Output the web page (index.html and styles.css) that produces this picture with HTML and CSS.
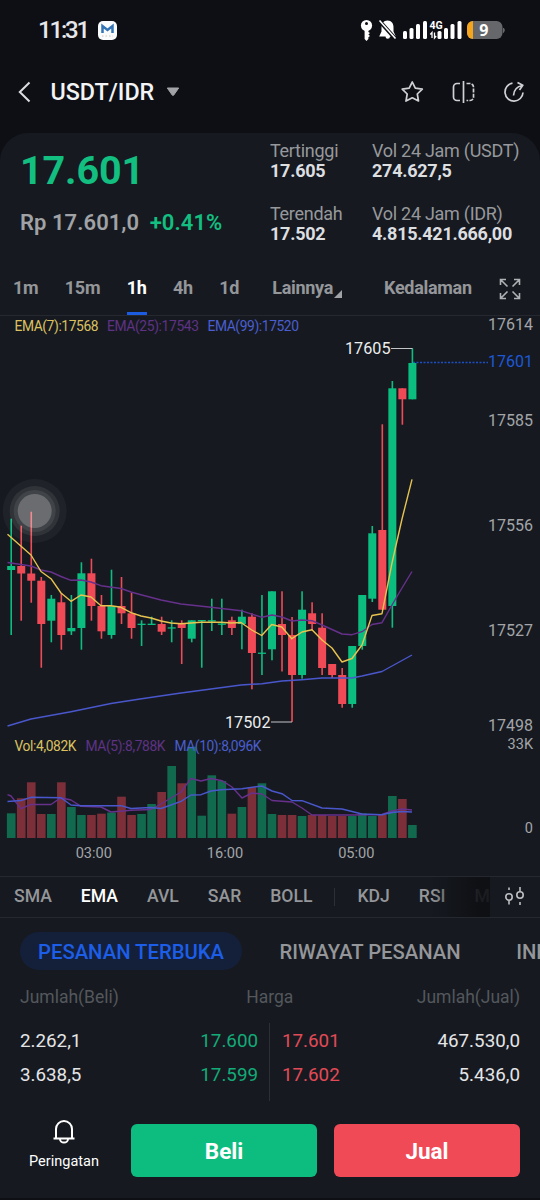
FILE: index.html
```html
<!DOCTYPE html>
<html lang="id">
  <head>
    <meta charset="UTF-8" />
    <meta name="viewport" content="width=device-width, initial-scale=1.0" />
    <title>USDT/IDR</title>
    <link rel="stylesheet" href="styles.css">
  </head>
  <body>
    <div class="status">
      <span class="time">11:31</span>
      <svg class="mail" width="19" height="19" viewBox="0 0 19 19">
        <rect width="19" height="19" rx="5" fill="#fafbfc" />
        <path d="M4.5 12V5L9.5 9L14.5 5V12" fill="none" stroke="#3474b4" stroke-width="2.5" />
        <path d="M4 15H15" stroke="#c9c4b8" stroke-width="1" stroke-dasharray="1.5 2" />
      </svg>
      <svg class="signals" width="146" height="24" viewBox="0 0 146 24">
        <circle cx="6.5" cy="7.5" r="5.6" fill="#fff" />
        <circle cx="6.5" cy="5.6" r="1.5" fill="#0e0f14" />
        <path d="M4.6 11H8.4V14L10 15L8.4 16.5L10 18L8.4 19.3V21L6.5 23L4.6 21Z" fill="#fff" />
        <path d="M27.5 2.5c-4 0-6 3-6 7v4l-2.3 5h16.6L33.5 13.5V9.5c0-4-2-7-6-7zM25.5 18.5h4.5a2.2 2.2 0 0 1-4.5 0z" fill="#fff" />
        <path d="M19.5 3L36 21.5" stroke="#0e0f14" stroke-width="4" />
        <path d="M19.5 2.5L35.5 20.5" stroke="#fff" stroke-width="1.6" />
        <g fill="#fff">
          <rect x="43" y="13" width="4" height="8" rx="1.5" />
          <rect x="49.5" y="10" width="4" height="11" rx="1.5" />
          <rect x="56" y="6" width="4" height="15" rx="1.5" />
          <rect x="63" y="3" width="4" height="18" rx="1.5" />
          <rect x="77.5" y="13" width="4" height="8" rx="1.5" />
          <rect x="84" y="10" width="4" height="11" rx="1.5" />
          <rect x="90.5" y="6" width="4" height="15" rx="1.5" />
          <rect x="97.5" y="3" width="4" height="18" rx="1.5" />
        </g>
        <path d="M72 20V14.5L70.3 16.5M74.5 14.5V20L76.2 18" stroke="#fff" stroke-width="1.3" fill="none" />
        <text class="net" x="69.5" y="11">4G</text>
        <clipPath id="cell"><rect x="107" y="3" width="35.5" height="18" rx="6" /></clipPath>
        <g clip-path="url(#cell)">
          <rect x="107" y="3" width="36" height="18" fill="#66676b" />
          <rect x="107" y="3" width="6" height="18" fill="#f5a51c" />
        </g>
        <path d="M143.5 10v4.5q1.8-2.2 0-4.5z" fill="#66676b" stroke="#66676b" />
        <text class="level" x="119.3" y="17.5">9</text>
      </svg>
    </div>

    <header class="header">
      <svg width="14" height="22" viewBox="0 0 14 22"><path d="M11.5 1.5L1.8 11L11.5 20.5" fill="none" stroke="#dcdde0" stroke-width="2" /></svg>
      <h1>USDT/IDR</h1>
      <svg class="caret" width="14" height="10" viewBox="0 0 14 10"><path d="M1.3 1H12.7L7.8 8Q7 9 6.2 8Z" fill="#a2a3a7" stroke="#a2a3a7" stroke-linejoin="round" /></svg>
      <svg class="tools" width="126" height="26" viewBox="0 0 126 26" fill="none" stroke="#d0d1d4" stroke-width="1.7" stroke-linejoin="round">
        <path d="M12.3 3L15.3 9.2L22.3 10.2L17.3 15L18.5 22L12.3 18.8L6 22L7.2 15L2.2 10.2L9.2 9.2Z" />
        <path d="M60 4.5H57a3.5 3.5 0 0 0-3.5 3.5v10a3.5 3.5 0 0 0 3.5 3.5h3M63.500 2V24" />
        <path d="M66.5 4.5H70a3.5 3.5 0 0 1 3.5 3.5v10a3.5 3.5 0 0 1-3.5 3.5h-3.5" stroke-dasharray="4 1.2" />
        <path d="M112.5 4.2A9 9 0 1 0 123 13.5M113.5 16.5Q114 8 122.5 6.5M117.5 3.5L122.8 6.3L119.5 11" />
      </svg>
    </header>

    <main class="panel">
      <section class="summary">
        <div class="last">
          <div class="price">17.601</div>
          <div class="fiat">Rp 17.601,0 <span class="up">+0.41%</span></div>
        </div>
        <dl class="range">
          <dt>Tertinggi</dt>
          <dd>17.605</dd>
          <dt>Terendah</dt>
          <dd>17.502</dd>
        </dl>
        <dl class="volume">
          <dt>Vol 24 Jam (USDT)</dt>
          <dd>274.627,5</dd>
          <dt>Vol 24 Jam (IDR)</dt>
          <dd>4.815.421.666,00</dd>
        </dl>
      </section>

      <nav class="frames">
        <span>1m</span>
        <span>15m</span>
        <span class="active">1h</span>
        <span>4h</span>
        <span>1d</span>
        <span class="more">Lainnya<i></i></span>
        <span class="depth">Kedalaman</span>
        <svg width="22" height="22" viewBox="0 0 22 22" fill="none" stroke="#b0b1b4" stroke-width="1.6">
          <path d="M1.5 7V1.5H7M1.5 1.5L8.5 8.5M15 1.5H20.5V7M20.5 1.5L13.5 8.5M1.5 15V20.5H7M1.5 20.5L8.5 13.5M15 20.5H20.5V15M20.5 20.5L13.5 13.5" />
        </svg>
      </nav>

      <svg class="chart" id="chart" width="540" height="560" viewBox="0 316 540 560">
        <g class="axis">
          <text x="533" y="330">17614</text>
          <text class="now" x="533" y="367">17601</text>
          <text x="533" y="426">17585</text>
          <text x="533" y="531">17556</text>
          <text x="533" y="636">17527</text>
          <text x="533" y="731">17498</text>
          <text class="small" x="533" y="748.5">33K</text>
          <text class="small" x="533" y="833">0</text>
        </g>
        <path d="M413 362.5H488" stroke="#1c4fc4" stroke-width="1.3" stroke-dasharray="2 1.5" />
        <g id="bars"></g>
        <g id="candles"></g>
        <g fill="none" stroke-width="1.4" stroke-linejoin="round">
          <polyline stroke="#4a57cc" points="7.5,726 31,719 71,711.7 111,703.5 140,699 181,693 241,685 262,683.7 282,681 302,679.7 322,678 352,678 362,676 382,671.5 412,655" />
          <polyline stroke="#67308c" points="7.5,562.5 21,564.5 31,566 41,570 51,572 61,576.5 71,580.3 81,580 91,582 101,585.7 121,588.5 131,592 140,594.5 161,600 181,604 211,607.3 241,610.7 262,617.3 272,615 282,617 292,621 302,620 312,620.7 322,625 342,634 352,634.7 362,631.7 372,624.5 382,622.7 392,605 402,588 412,571.5" />
          <polyline stroke="#e8c34f" points="7.5,534.3 31,555 41,571.5 51,578.7 61,593 71,601.3 81,595 91,597 101,605.7 111,605.7 121,607.3 131,612.7 141,616 151,618 161,621 171,623 181,623.7 201,622.3 221,622.3 231,623 241,622.5 251.7,630 261.7,635.5 271.7,624.5 281.8,627 291.8,638.7 302,632 312,629.7 322,640 332,648 342,662 352,658.5 362,645 372,615.5 382,613.7 392,563 402,519 412,479.3" />
          <polyline stroke="#67308c" points="7.5,794.7 11,796 21,808.7 31,804.5 51,804.5 61,797.7 71,800 81,806.3 101,807 111,812 131,810.3 151,809.5 161,804 171,798 181,792 191,778.5 201,781 211,778.5 222,780.7 232,787 242,798 252,793 262,794 272,800.5 292,802 302,808 312,815 352,815 382,814.5 392,811 402,809 412,810" />
          <polyline stroke="#4a57cc" points="7.5,801.5 21,800.5 31,797.3 61,797.7 71,805 81,805.7 121,805.7 131,808.5 151,807.5 161,808.5 171,805 181,801.3 191,795 201,794.7 211,791 221,789.7 242,788.7 262,786 272,791 282,793.7 292,800.5 302,800.7 322,808 342,809 362,814 382,814.7 392,812.5 402,811.5 412,812" />
        </g>
        <g class="marks">
          <path d="M391 348.5H412.5M271 722H292" stroke="#c3c4c7" stroke-width="1.2" />
          <text x="345" y="353.5">17605</text>
          <text x="225" y="727.5">17502</text>
        </g>
        <g class="legend">
          <text class="yellow" x="14.5" y="331" textLength="84">EMA(7):17568</text>
          <text class="purple" x="107" y="331" textLength="92">EMA(25):17543</text>
          <text class="blue" x="207.5" y="331" textLength="91.5">EMA(99):17520</text>
          <text class="yellow" x="14.5" y="751" textLength="62">Vol:4,082K</text>
          <text class="purple" x="85.5" y="751" textLength="80">MA(5):8,788K</text>
          <text class="blue" x="174.5" y="751" textLength="87">MA(10):8,096K</text>
        </g>
        <g class="hours">
          <text x="93.8" y="858">03:00</text>
          <text x="225" y="858">16:00</text>
          <text x="356.3" y="858">05:00</text>
        </g>
        <g fill="#fff">
          <circle cx="34.7" cy="511" r="32" fill-opacity="0.04" />
          <circle cx="34.7" cy="511" r="25" fill-opacity="0.08" />
          <circle cx="34.7" cy="511" r="21" fill-opacity="0.08" />
          <circle cx="34.7" cy="511" r="17" fill-opacity="0.22" />
        </g>
      </svg>

      <nav class="indicators">
        <div class="list">
          <span>SMA</span>
          <span class="active">EMA</span>
          <span>AVL</span>
          <span>SAR</span>
          <span>BOLL</span>
          <i></i>
          <span>KDJ</span>
          <span>RSI</span>
          <span class="cut">M</span>
        </div>
        <svg width="22" height="20" viewBox="0 0 22 20" fill="none" stroke="#bdbec1" stroke-width="1.6">
          <circle cx="5" cy="11" r="3.2" /><circle cx="16" cy="9" r="3.2" />
          <path d="M5 1.5V4M5 14.5V18.5M16 1V5.5M16 16V19" />
        </svg>
      </nav>

      <nav class="orders">
        <span class="active">PESANAN TERBUKA</span>
        <span class="history">RIWAYAT PESANAN</span>
        <span class="info">INFO</span>
      </nav>

      <section class="book">
        <div class="row head"><span>Jumlah(Beli)</span><span class="harga">Harga</span><span>Jumlah(Jual)</span></div>
        <div class="levels">
          <div class="side buy">
            <div class="row"><span>2.262,1</span><b>17.600</b></div>
            <div class="row"><span>3.638,5</span><b>17.599</b></div>
          </div>
          <div class="side sell">
            <div class="row"><b>17.601</b><span>467.530,0</span></div>
            <div class="row"><b>17.602</b><span>5.436,0</span></div>
          </div>
        </div>
      </section>

      <footer class="actions">
        <div class="alert">
          <svg width="24" height="26" viewBox="0 0 24 26" fill="none" stroke="#fff" stroke-width="2">
            <path d="M1.5 19.5H22.5M4 19.5V10a8 8 0 0 1 16 0V19.5M8 20a4 3.6 0 0 0 8 0" />
          </svg>
          <span>Peringatan</span>
        </div>
        <button class="beli">Beli</button>
        <button class="jual">Jual</button>
      </footer>
    </main>
    <script src="chart.js"></script>
  </body>
</html>
```
FILE: styles.css
```css
* {
  box-sizing: border-box;
}
body {
  margin: 0;
  width: 540px;
  height: 1200px;
  overflow: hidden;
  background: #0e0f14;
  color: #e4e5e7;
  font-family: Roboto, "Liberation Sans", sans-serif;
}
svg {
  display: block;
  flex: none;
}
dl, dd, h1 {
  margin: 0;
}

.status {
  display: flex;
  align-items: center;
  height: 60px;
  padding: 0 34px 0 38px;
}
.time {
  width: 60px;
  font-size: 24px;
  letter-spacing: -2.2px;
  color: #e6e7ea;
  font-weight: 500;
}
.signals {
  margin-left: auto;
}
.net {
  font: 700 10.5px Roboto, sans-serif;
  fill: #fff;
}
.level {
  font: 700 16px "Open Sans", sans-serif;
  fill: #fff;
}

.header {
  display: flex;
  align-items: center;
  height: 73px;
  padding: 0 14px 10px 18px;
}
.header h1 {
  margin-left: 18.5px;
  padding-top: 1px;
  font-size: 23.3px;
  font-weight: 500;
  color: #f2f3f5;
}
.caret {
  margin-left: 11.5px;
}
.tools {
  margin-left: auto;
}

.panel {
  height: 1065px;
  background: #161a20;
  border-radius: 28px 28px 0 0;
}

.summary {
  display: flex;
  height: 126px;
  padding: 7px 0 0 20px;
}
.last {
  width: 250px;
}
.price {
  height: 62px;
  padding-top: 8px;
  font-size: 39.5px;
  line-height: 46px;
  letter-spacing: -0.1px;
  font-weight: 700;
  color: #12be80;
}
.fiat {
  padding-top: 8px;
  font-size: 22px;
  line-height: 26px;
  font-weight: 600;
  letter-spacing: 0.05px;
  color: #a0a2a6;
  white-space: nowrap;
}
.up {
  margin-left: 5px;
  color: #12be80;
}
.range {
  width: 102px;
}
.summary dt {
  font-size: 18px;
  line-height: 21px;
  letter-spacing: -0.28px;
  color: #96989c;
  white-space: nowrap;
}
.summary dd {
  height: 42px;
  font-size: 18px;
  line-height: 19px;
  letter-spacing: -0.25px;
  font-weight: 700;
  color: #dddee0;
}

.frames {
  display: flex;
  align-items: center;
  height: 57px;
  padding: 0 19.5px 0 13px;
  border-bottom: 1px solid #25292f;
  font-size: 18px;
  letter-spacing: -0.3px;
  font-weight: 700;
  color: #94969a;
}
.frames span {
  line-height: 57px;
  height: 56px;
  margin-right: 26.5px;
}
.frames svg {
  margin-top: 3px;
}
.frames .active {
  color: #fff;
  border-bottom: 3px solid #1b5ce0;
}
.frames .more {
  position: relative;
  margin: 0 51px 0 6.5px;
}
.more i {
  position: absolute;
  right: -9px;
  bottom: 17px;
  border-bottom: 8px solid #a0a2a6;
  border-left: 8px solid transparent;
}
.frames .depth {
  margin-right: auto;
}

.legend text {
  font-size: 13.8px;
}
.yellow {
  fill: #dcc161;
}
.purple {
  fill: #5f3286;
}
.blue {
  fill: #4a5ed0;
}
.axis text {
  font-size: 16px;
  text-anchor: end;
  fill: #a3a5a9;
}
.axis .now {
  fill: #1d58d8;
}
.axis .small {
  font-size: 14.5px;
}
.marks text {
  font-size: 16.2px;
  fill: #eceded;
}
.hours text {
  font-size: 14.6px;
  text-anchor: middle;
  fill: #a3a5a9;
}
.candle-up {
  fill: #0cbd80;
}
.candle-down {
  fill: #ef4a56;
}
.bar-up {
  fill: #126a4e;
}
.bar-down {
  fill: #7d2f39;
}

.indicators {
  display: flex;
  align-items: center;
  height: 42px;
  border: solid #25292f;
  border-width: 1px 0;
  font-size: 17.6px;
  font-weight: 500;
  color: #94969a;
}
.list {
  position: relative;
  display: flex;
  align-items: center;
  width: 490px;
  height: 40px;
  padding: 0 0 2px 14px;
  margin-right: 14px;
}
.list::after {
  content: "";
  position: absolute;
  right: 0;
  top: 0;
  width: 60px;
  height: 40px;
  background: linear-gradient(to right, rgba(14, 15, 19, 0), #0e0f13 80%);
  opacity: 0.9;
}
.indicators svg {
  margin-bottom: 2px;
}
.list span {
  margin-right: 29px;
}
.list i {
  flex: none;
  width: 1px;
  height: 18px;
  margin: 2px 22px 0 -7px;
  background: #2c3036;
}
.list .active {
  color: #fff;
}
.list .cut {
  margin-right: 0;
}

.orders {
  display: flex;
  align-items: center;
  height: 66px;
  padding-left: 20px;
  overflow: hidden;
  font-size: 20.3px;
  font-weight: 500;
  color: #94969a;
  white-space: nowrap;
}
.orders span {
  flex: none;
  padding-top: 1px;
}
.orders .active {
  width: 222px;
  height: 38px;
  line-height: 38px;
  border-radius: 19px;
  text-align: center;
  background: #14203a;
  color: #1c5ee8;
}
.history {
  margin: 0 55.5px 0 37.5px;
}

.book {
  padding: 0 20px;
  height: 134px;
}
.row {
  display: flex;
  justify-content: space-between;
}
.head {
  height: 39px;
  line-height: 26px;
  font-size: 17.5px;
  color: #54575c;
}
.harga {
  padding-left: 4px;
}
.levels {
  display: flex;
  height: 78px;
}
.side {
  width: 250px;
  padding-top: 0.5px;
  font-size: 18.8px;
  line-height: 34.5px;
}
.side b {
  font-weight: 400;
}
.buy {
  padding-right: 11px;
  border-right: 1px solid #2c3036;
}
.sell {
  padding-left: 12px;
}
.buy b {
  color: #13ab78;
}
.sell b {
  color: #e24a57;
}

.actions {
  display: flex;
  padding: 6px 20px 0 20px;
}
.alert {
  width: 88px;
  margin-right: 23px;
  margin-top: -5px;
  display: flex;
  flex-direction: column;
  align-items: center;
  gap: 8px;
  font-size: 14.5px;
  color: #fff;
}
.actions button {
  width: 186px;
  height: 53px;
  margin-right: 17px;
  padding: 1px 0 0;
  border: 0;
  border-radius: 6px;
  font: 700 22.5px Roboto, sans-serif;
  color: #fff;
}
.beli {
  background: #0dbd80;
}
.actions .jual {
  margin: 0;
  background: #ef4a56;
}
```
FILE: chart.js
```js
// direction, high, body top, body bottom, low, volume top
var data = [
  [1, 518.7, 566, 570, 635, 813.3],
  [0, 525.7, 566, 573.5, 620.7, 798.3],
  [0, 511.7, 573.5, 580.7, 602.7, 782.3],
  [0, 577, 580.7, 624, 667.7, 814],
  [1, 595, 598.7, 620.7, 642.3, 814],
  [0, 593, 602.3, 635, 649.7, 782.3],
  [1, 595, 628, 631.3, 635, 807],
  [1, 562.3, 573.3, 628, 649.7, 815],
  [0, 558.7, 573.3, 606, 620.7, 815],
  [0, 595, 606, 631.3, 638.7, 813.7],
  [1, 569.7, 606, 635, 638.7, 812.5],
  [0, 577, 606, 613.3, 624, 796.7],
  [0, 592.7, 613.3, 628, 638.7, 815],
  [1, 620.3, 623.7, 625, 646, 814],
  [1, 616.7, 623.7, 625, 625, 804],
  [0, 616.7, 624, 631.7, 635, 792],
  [1, 620.3, 627.3, 628.6, 642.3, 766],
  [0, 620.3, 624, 628, 664, 783.3],
  [1, 620.3, 620.3, 638.7, 642.3, 746.7],
  [1, 620, 620, 621.3, 667.7, 815.7],
  [1, 598.7, 620.2, 621.5, 631, 775.3],
  [1, 598.7, 623.5, 624.8, 635, 781],
  [0, 616.7, 620.3, 628, 635, 813.7],
  [1, 609.7, 616.7, 624, 649.3, 807],
  [0, 613.3, 616.7, 653, 689.3, 787.3],
  [1, 595, 652.6, 653.9, 675, 783.3],
  [1, 591.3, 591.3, 649.3, 660.3, 814],
  [0, 591.3, 624, 635, 671.5, 815],
  [0, 617, 635, 675, 722, 815],
  [1, 591.3, 609.7, 675, 678.7, 816],
  [0, 602.3, 613.3, 624, 630, 815],
  [0, 613.3, 627.7, 668, 675, 815],
  [0, 664, 664, 675, 678, 816],
  [0, 668, 675, 704, 707.7, 816],
  [1, 646, 646, 704, 707.7, 816],
  [1, 595, 595, 646, 649.7, 813.3],
  [1, 526, 533.3, 598.7, 602, 816],
  [0, 424.3, 530, 609.7, 609.7, 815],
  [1, 381, 388.3, 606, 627.7, 796],
  [0, 388.3, 388.3, 399.3, 424.7, 799],
  [1, 348.3, 363, 399.3, 399.3, 825]
];

function addRect(parent, cls, x, top, w, bottom) {
  var r = document.createElementNS("http://www.w3.org/2000/svg", "rect");
  r.setAttribute("class", cls);
  r.setAttribute("x", x);
  r.setAttribute("y", top);
  r.setAttribute("width", w);
  r.setAttribute("height", bottom - top);
  parent.appendChild(r);
}

var candles = document.getElementById("candles");
var bars = document.getElementById("bars");

data.forEach(function (d, i) {
  var x = 11.2 + i * 10.03;
  var dir = d[0] ? "up" : "down";
  addRect(candles, "candle-" + dir, x - 0.8, d[1], 1.6, d[4]);
  addRect(candles, "candle-" + dir, x - 4, d[2], 8, d[3]);
  addRect(bars, "bar-" + dir, x - 4.3, d[5], 8.6, 838);
});
```
